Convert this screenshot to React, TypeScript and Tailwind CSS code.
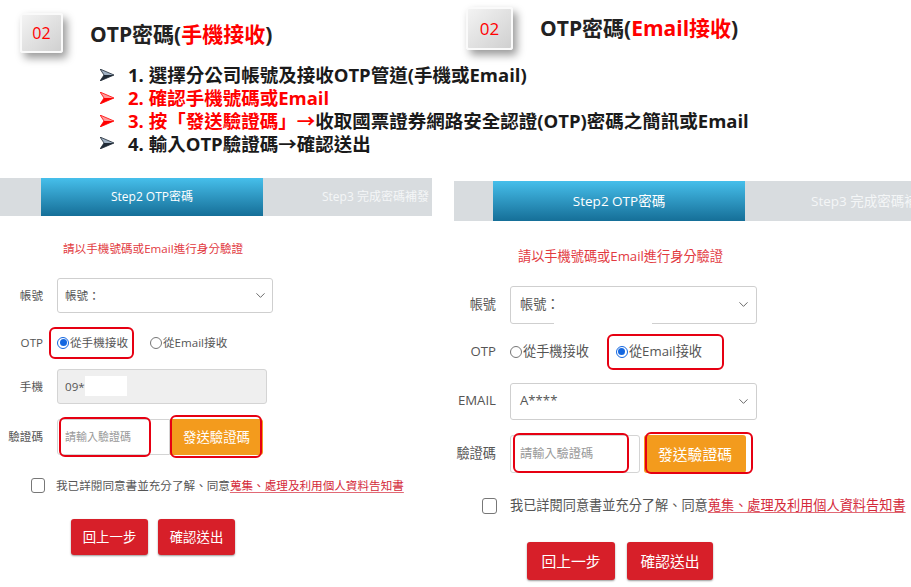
import { ChevronDown } from "lucide-react";

const F = "font-['Open_Sans','Noto_Sans_CJK_TC',sans-serif]";

function Badge({ className }: { className: string }) {
  return (
    <div
      className={`flex shrink-0 items-center justify-center rounded-[3px] border-2 border-[#fafafa] bg-gradient-to-br from-[#f3f3f3] to-[#d0d0d0] text-[#ff0000] shadow-[4px_5px_9px_rgba(0,0,0,0.4)] ${className}`}
    >
      02
    </div>
  );
}

function Arrow({ red }: { red?: boolean }) {
  const dark = red ? "#ff0000" : "#1f2a36";
  const light = red ? "#ff9a9a" : "#9fb0c2";
  return (
    <svg width="14" height="12" viewBox="0 0 14 12" className="shrink-0">
      <polygon points="0,0 14,6 4,6" fill={light} />
      <polygon points="4,6 14,6 0,12" fill={dark} />
      <polyline points="0,0 14,6 0,12 4,6 0,0" fill="none" stroke={dark} strokeWidth="0.8" />
    </svg>
  );
}

function Radio({ on }: { on?: boolean }) {
  return on ? (
    <span className="flex h-[12px] w-[12px] shrink-0 items-center justify-center rounded-full border-[1.5px] border-[#1467e0] bg-white">
      <span className="h-[7px] w-[7px] rounded-full bg-[#1467e0]" />
    </span>
  ) : (
    <span className="h-[12px] w-[12px] shrink-0 rounded-full border border-[#767676] bg-white" />
  );
}

function Mark({ className }: { className: string }) {
  return <div className={`pointer-events-none absolute rounded-[6px] border-2 border-[#e60012] ${className}`} />;
}

function Chevron() {
  return <ChevronDown size={15} strokeWidth={1.4} color="#555" />;
}

function LeftPanel() {
  return (
    <div className="w-[432px] shrink-0 text-[11.6px] text-[#555]">
      <div className="flex h-[38px] bg-[#d8dcdf] text-[12px]">
        <div className="w-[41px] shrink-0" />
        <div className="flex w-[222px] shrink-0 items-center justify-center bg-gradient-to-b from-[#46bfeb] to-[#156f98] text-white">
          Step2 OTP密碼
        </div>
        <div className="flex min-w-0 flex-1 items-center overflow-hidden whitespace-nowrap pl-[59px] text-[#f4f6f7]">
          Step3 完成密碼補發
        </div>
      </div>

      <div className="mt-[24px] pl-[63px] leading-[18px] text-[#e23a3f]">請以手機號碼或Email進行身分驗證</div>

      <div className="mt-[20px] flex h-[35px] items-center">
        <div className="w-[43px] text-right">帳號</div>
        <div className="ml-[14px] flex h-full w-[216px] items-center justify-between rounded-[3px] border border-[#cfcfcf] pl-[7px] pr-[4px]">
          <span>帳號：</span>
          <Chevron />
        </div>
      </div>

      <div className="mt-[14px] flex h-[32px] items-center">
        <div className="w-[43px] text-right">OTP</div>
        <div className="relative ml-[14px] flex h-full items-center gap-[1px]">
          <Mark className="inset-y-0 -left-[8px] w-[85px]" />
          <Radio on />
          <span>從手機接收</span>
        </div>
        <div className="ml-[22px] flex items-center gap-[1px]">
          <Radio />
          <span>從Email接收</span>
        </div>
      </div>

      <div className="mt-[10px] flex h-[35px] items-center">
        <div className="w-[43px] text-right">手機</div>
        <div className="ml-[14px] flex h-full w-[210px] items-center rounded-[3px] border border-[#d4d4d4] bg-[#efefef] pl-[7px]">
          <span>09*</span>
          <span className="h-[20px] w-[42px] bg-white" />
        </div>
      </div>

      <div className="mt-[15px] flex h-[36px] items-center">
        <div className="w-[43px] text-right">驗證碼</div>
        <div className="relative ml-[14px] flex h-full w-[113px] items-center rounded-l-[3px] border border-[#d4d4d4] pl-[7px] text-[11px] text-[#999]">
          <Mark className="-top-[3px] -bottom-[3px] left-[1px] w-[92px]" />
          請輸入驗證碼
        </div>
        <div className="relative flex h-full w-[93px] items-center justify-center rounded-r-[3px] bg-[#f39b1d] text-[13.4px] text-white">
          <Mark className="-top-[4px] -bottom-[3px] left-0 right-[1px]" />
          發送驗證碼
        </div>
      </div>

      <div className="mt-[22px] flex h-[18px] items-center pl-[31px]">
        <span className="h-[15px] w-[14px] shrink-0 rounded-[3px] border-[1.5px] border-[#777]" />
        <span className="ml-[11px] whitespace-nowrap">
          我已詳閱同意書並充分了解、同意
          <span className="text-[#d42a3a] underline decoration-[#d42a3a]/70 underline-offset-2">
            蒐集、處理及利用個人資料告知書
          </span>
        </span>
      </div>

      <div className="mt-[24px] flex gap-[10px] pl-[71px]">
        <div className="flex h-[36px] w-[77px] items-center justify-center rounded-[3px] bg-[#d71f29] text-[13.4px] text-white shadow-[0_1px_2px_rgba(0,0,0,0.4)]">
          回上一步
        </div>
        <div className="flex h-[36px] w-[77px] items-center justify-center rounded-[3px] bg-[#d71f29] text-[13.4px] text-white shadow-[0_1px_2px_rgba(0,0,0,0.4)]">
          確認送出
        </div>
      </div>
    </div>
  );
}

function RightPanel() {
  return (
    <div className="ml-[22px] mt-[3px] min-w-0 flex-1 text-[13.2px] text-[#555]">
      <div className="flex h-[40px] bg-[#d8dcdf] text-[13.5px]">
        <div className="w-[39px] shrink-0" />
        <div className="flex w-[252px] shrink-0 items-center justify-center bg-gradient-to-b from-[#46bfeb] to-[#156f98] text-white">
          Step2 OTP密碼
        </div>
        <div className="flex min-w-0 flex-1 items-center overflow-hidden whitespace-nowrap pl-[66px] text-[#f4f6f7]">
          Step3 完成密碼補
        </div>
      </div>

      <div className="mt-[25px] pl-[64px] leading-[20px] text-[#e23a3f]">請以手機號碼或Email進行身分驗證</div>

      <div className="mt-[20px] flex h-[38px] items-center">
        <div className="w-[42px] text-right">帳號</div>
        <div className="relative ml-[14px] flex h-full w-[247px] items-center justify-between rounded-[3px] border border-[#cfcfcf] pl-[9px] pr-[5px]">
          <span>帳號：</span>
          <Chevron />
          <span className="absolute left-[43px] top-[32px] h-[8px] w-[98px] bg-white" />
        </div>
      </div>

      <div className="mt-[10px] flex h-[36px] items-center">
        <div className="w-[42px] text-right">OTP</div>
        <div className="ml-[14px] flex items-center gap-[1px]">
          <Radio />
          <span>從手機接收</span>
        </div>
        <div className="relative ml-[27px] flex h-full items-center gap-[1px]">
          <Mark className="inset-y-0 -left-[9px] w-[117px]" />
          <Radio on />
          <span>從Email接收</span>
        </div>
      </div>

      <div className="mt-[13px] flex h-[37px] items-center">
        <div className="w-[42px] text-right">EMAIL</div>
        <div className="ml-[14px] flex h-full w-[247px] items-center justify-between rounded-[3px] border border-[#cfcfcf] pl-[9px] pr-[5px]">
          <span>A****</span>
          <Chevron />
        </div>
      </div>

      <div className="mt-[15px] flex h-[38px] items-center">
        <div className="w-[42px] text-right">驗證碼</div>
        <div className="relative ml-[14px] flex h-full w-[130px] items-center rounded-[3px] border border-[#d4d4d4] pl-[9px] text-[12.2px] text-[#999]">
          <Mark className="-top-[3px] -bottom-[1px] left-[2px] w-[116px]" />
          請輸入驗證碼
        </div>
        <div className="relative ml-[4px] flex h-full w-[102px] items-center justify-center rounded-[3px] bg-[#f39b1d] text-[14.8px] text-white">
          <Mark className="-top-[3px] -bottom-[1px] left-[1px] -right-[7px]" />
          發送驗證碼
        </div>
      </div>

      <div className="mt-[24px] flex h-[18px] items-center pl-[28px]">
        <span className="h-[16px] w-[15px] shrink-0 rounded-[3px] border-[1.5px] border-[#777]" />
        <span className="ml-[13px] whitespace-nowrap">
          我已詳閱同意書並充分了解、同意
          <span className="text-[#d42a3a] underline decoration-[#d42a3a]/70 underline-offset-2">
            蒐集、處理及利用個人資料告知書
          </span>
        </span>
      </div>

      <div className="mt-[27px] flex gap-[12px] pl-[73px]">
        <div className="flex h-[38px] w-[88px] items-center justify-center rounded-[3px] bg-[#d71f29] text-[14.8px] text-white shadow-[0_1px_2px_rgba(0,0,0,0.4)]">
          回上一步
        </div>
        <div className="flex h-[38px] w-[86px] items-center justify-center rounded-[3px] bg-[#d71f29] text-[14.8px] text-white shadow-[0_1px_2px_rgba(0,0,0,0.4)]">
          確認送出
        </div>
      </div>
    </div>
  );
}

export default function App() {
  const bullets = [
    { red: false, text: <>1. 選擇分公司帳號及接收OTP管道(手機或Email)</> },
    { red: true, text: <span className="text-[#ff0000]">2. 確認手機號碼或Email</span> },
    {
      red: true,
      text: (
        <>
          <span className="text-[#ff0000]">3. 按「發送驗證碼」→</span>收取國票證券網路安全認證(OTP)密碼之簡訊或Email
        </>
      ),
    },
    { red: false, text: <>4. 輸入OTP驗證碼→確認送出</> },
  ];

  return (
    <div className={`h-[587px] w-[911px] overflow-hidden bg-white ${F}`}>
      {/* headings */}
      <div className="flex items-start">
        <div className="flex w-[443px] shrink-0 items-center pl-[20px] pt-[13px]">
          <Badge className="h-[40px] w-[43px] text-[16px]" />
          <div className="ml-[27px] mt-[4px] text-[21px] font-bold text-[#222]">
            OTP密碼(<span className="text-[#ff0000]">手機接收</span>)
          </div>
        </div>
        <div className="flex items-center pl-[23px] pt-[7px]">
          <Badge className="h-[43px] w-[47px] text-[17px]" />
          <div className="ml-[27px] text-[21px] font-bold text-[#222]">
            OTP密碼(<span className="text-[#ff0000]">Email接收</span>)
          </div>
        </div>
      </div>

      {/* steps */}
      <div className="mt-[11px] pl-[100px] text-[18.5px] font-bold text-[#1a1a1a]">
        {bullets.map((b, i) => (
          <div key={i} className="flex h-[22.7px] items-center whitespace-nowrap">
            <Arrow red={b.red} />
            <span className="ml-[14px]">{b.text}</span>
          </div>
        ))}
      </div>

      {/* screens */}
      <div className="mt-[23px] flex">
        <LeftPanel />
        <RightPanel />
      </div>
    </div>
  );
}
